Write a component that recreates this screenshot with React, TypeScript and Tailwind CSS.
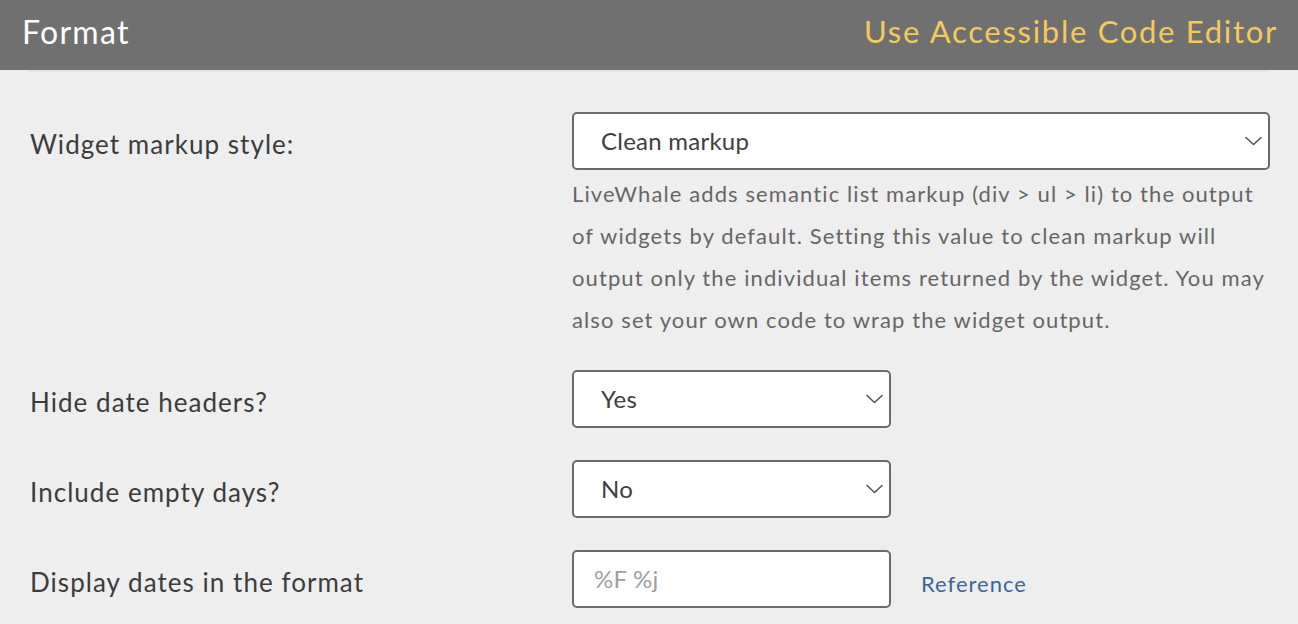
type SelectProps = {
  value: string;
  wide?: boolean;
};

function Chevron() {
  return (
    <svg width="17" height="10" viewBox="0 0 17 10" fill="none" className="text-[#555]">
      <polyline
        points="1,1.5 8.5,8.5 16,1.5"
        stroke="currentColor"
        strokeWidth="1.6"
        strokeLinecap="round"
        strokeLinejoin="round"
      />
    </svg>
  );
}

function FakeSelect({ value, wide }: SelectProps) {
  return (
    <div
      className={`flex h-[58px] items-center justify-between rounded-[5px] border-2 border-[#6b6b6b] bg-white pl-[27px] pr-[6px] ${
        wide ? "w-[698px]" : "w-[319px]"
      }`}
    >
      <span className="text-[24px] tracking-[0.01em] text-[#404040]">{value}</span>
      <Chevron />
    </div>
  );
}

function Label({ children }: { children: string }) {
  return (
    <div className="flex h-[58px] w-[542px] shrink-0 items-center pt-[6px] text-[26px] tracking-[0.04em] text-[#3c3c3c]">
      {children}
    </div>
  );
}

export default function App() {
  return (
    <div className="min-h-screen bg-[#eeeeee] font-['Lato','Liberation_Sans',sans-serif]">
      <header className="flex h-[70px] items-center justify-between bg-[#707070] pb-[7px] pl-[22px] pr-[20px]">
        <h1 className="text-[32px] tracking-[0.04em] text-white">Format</h1>
        <a className="text-[31px] tracking-[0.055em] text-[#f5c95c]">Use Accessible Code Editor</a>
      </header>
      <div className="mx-[28px] h-[2px] bg-[#e4e4e4]" />

      <div className="flex flex-col gap-[32px] pl-[30px] pt-[40px]">
        <div className="flex items-start">
          <Label>Widget markup style:</Label>
          <div className="flex flex-col">
            <FakeSelect value="Clean markup" wide />
            <p className="-mb-[3px] mt-[3px] w-[700px] text-[22px] leading-[42px] tracking-[0.05em] text-[#666]">
              LiveWhale adds semantic list markup (div &gt; ul &gt; li) to the output of
              widgets by default. Setting this value to clean markup will output only the
              individual items returned by the widget. You may also set your own code to
              wrap the widget output.
            </p>
          </div>
        </div>

        <div className="flex items-start">
          <Label>Hide date headers?</Label>
          <FakeSelect value="Yes" />
        </div>

        <div className="flex items-start">
          <Label>Include empty days?</Label>
          <FakeSelect value="No" />
        </div>

        <div className="flex items-center">
          <Label>Display dates in the format</Label>
          <div className="flex h-[58px] w-[319px] items-center rounded-[5px] border-2 border-[#6b6b6b] bg-white pl-[20px]">
            <span className="text-[24px] tracking-[0.01em] text-[#a0a0a0]">%F %j</span>
          </div>
          <a className="ml-[30px] pt-[8px] text-[22px] tracking-[0.045em] text-[#3b6697]">Reference</a>
        </div>
      </div>
    </div>
  );
}
